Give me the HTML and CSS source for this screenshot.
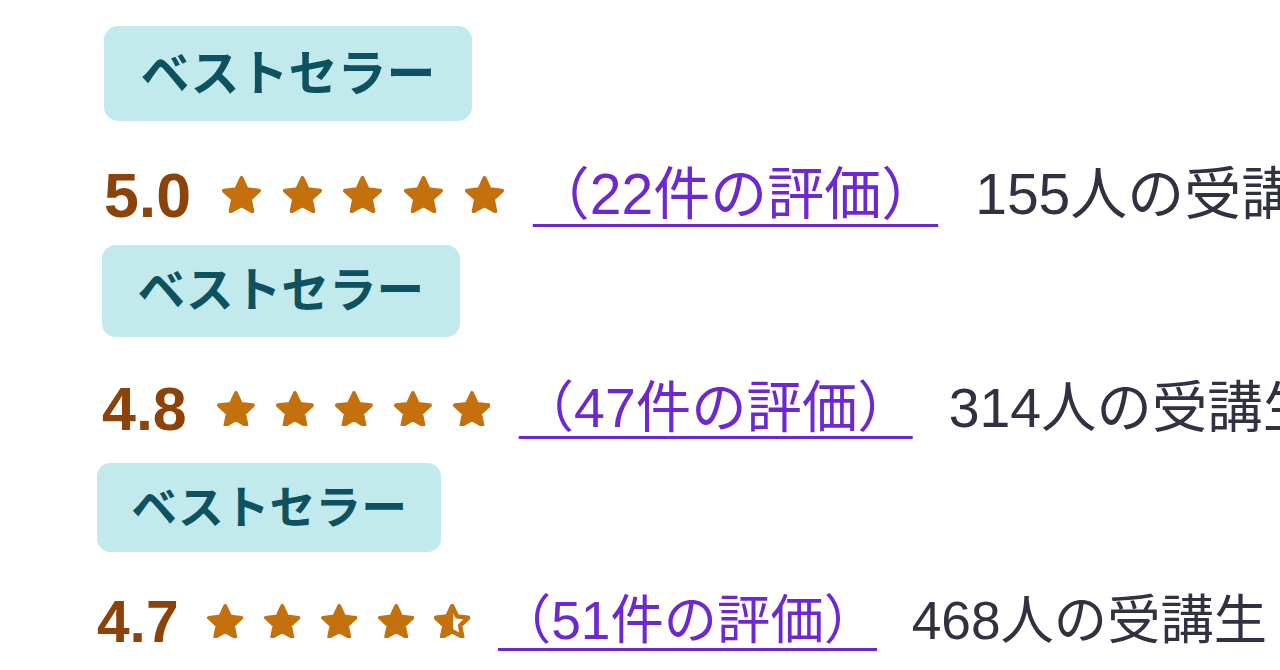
FILE: index.html
```html
<!DOCTYPE html>
<html lang="ja">
<head>
<meta charset="utf-8">
<title>ベストセラー</title>
<link rel="stylesheet" href="styles.css">
</head>
<body>
<svg class="defs" width="0" height="0" aria-hidden="true">
  <defs>
    <clipPath id="half-clip"><rect x="0" y="0" width="20.5" height="37"/></clipPath>
  </defs>
  <symbol id="star" viewBox="0 0 39 37">
    <polygon points="19.5,2 24.69,13.26 37,14.71 27.9,23.13 30.32,35.29 19.5,29.23 8.68,35.29 11.1,23.13 2,14.71 14.31,13.26" fill="currentColor" stroke="currentColor" stroke-width="4" stroke-linejoin="round"/>
  </symbol>
  <symbol id="star-half" viewBox="0 0 39 37">
    <polygon points="19.5,2 24.69,13.26 37,14.71 27.9,23.13 30.32,35.29 19.5,29.23 8.68,35.29 11.1,23.13 2,14.71 14.31,13.26" fill="currentColor" stroke="currentColor" stroke-width="4" stroke-linejoin="round" clip-path="url(#half-clip)"/>
    <polygon points="19.5,2.4 24.69,13.26 36.6,14.81 27.9,23.13 30.22,34.9 19.5,29.23 8.78,34.9 11.1,23.13 2.4,14.81 14.31,13.26" fill="none" stroke="currentColor" stroke-width="4.8" stroke-linejoin="round"/>
  </symbol>
</svg>

<div class="list">
  <div class="course r1">
    <span class="badge">ベストセラー</span>
    <div class="rating">
      <span class="score">5.0</span>
      <span class="stars">
        <svg class="star"><use href="#star"/></svg>
        <svg class="star"><use href="#star"/></svg>
        <svg class="star"><use href="#star"/></svg>
        <svg class="star"><use href="#star"/></svg>
        <svg class="star"><use href="#star"/></svg>
      </span>
      <a class="reviews" href="#">（22件の評価）</a>
      <span class="students">155人の受講生</span>
    </div>
  </div>

  <div class="course r2">
    <span class="badge">ベストセラー</span>
    <div class="rating">
      <span class="score">4.8</span>
      <span class="stars">
        <svg class="star"><use href="#star"/></svg>
        <svg class="star"><use href="#star"/></svg>
        <svg class="star"><use href="#star"/></svg>
        <svg class="star"><use href="#star"/></svg>
        <svg class="star"><use href="#star"/></svg>
      </span>
      <a class="reviews" href="#">（47件の評価）</a>
      <span class="students">314人の受講生</span>
    </div>
  </div>

  <div class="course r3">
    <span class="badge">ベストセラー</span>
    <div class="rating">
      <span class="score">4.7</span>
      <span class="stars">
        <svg class="star"><use href="#star"/></svg>
        <svg class="star"><use href="#star"/></svg>
        <svg class="star"><use href="#star"/></svg>
        <svg class="star"><use href="#star"/></svg>
        <svg class="star"><use href="#star-half"/></svg>
      </span>
      <a class="reviews" href="#">（51件の評価）</a>
      <span class="students">468人の受講生</span>
    </div>
  </div>
</div>
</body>
</html>
```

FILE: styles.css
```css
html, body {
  margin: 0;
  padding: 0;
  background: #ffffff;
  overflow: hidden;
}

body {
  width: 1280px;
  height: 670px;
  font-family: "Liberation Sans", "Noto Sans CJK JP", sans-serif;
  color: #303141;
}

.defs {
  display: block;
  width: 0;
  height: 0;
  overflow: hidden;
}

.list {
  display: grid;
  grid-auto-rows: 218.5px;
  padding-top: 26px;
}

.course {
  display: flex;
  flex-direction: column;
  align-items: flex-start;
  white-space: nowrap;
}

.r1 { font-size: 57px; padding-left: 104px; }
.r2 { font-size: 55.4px; padding-left: 102px; }
.r3 { font-size: 53.3px; padding-left: 97px; }

.badge {
  font-family: "Noto Sans CJK JP", sans-serif;
  font-size: 0.86em;
  font-weight: 700;
  line-height: 1.4;
  color: #0d5261;
  background: #c2e9eb;
  padding: 0.2em 0.745em 0.34em;
  border-radius: 0.29em;
}

.rating {
  display: flex;
  align-items: center;
  height: 1.4em;
  line-height: 1.4;
  margin-top: 0.593em;
}

.score {
  font-size: 1.1em;
  font-weight: 700;
  color: #8b4309;
  padding-top: 0.04em;
}

.stars {
  display: flex;
  align-items: center;
  gap: 0.38em;
  margin: 0 0.51em 0 0.544em;
  color: #c4710d;
}

.star {
  display: block;
  width: 0.684em;
  height: 0.649em;
}

.reviews {
  color: #6d28d2;
  text-decoration: underline;
  text-decoration-thickness: 0.055em;
  text-underline-offset: 0.17em;
}

.students {
  margin-left: 0.65em;
  color: #303141;
}
```
